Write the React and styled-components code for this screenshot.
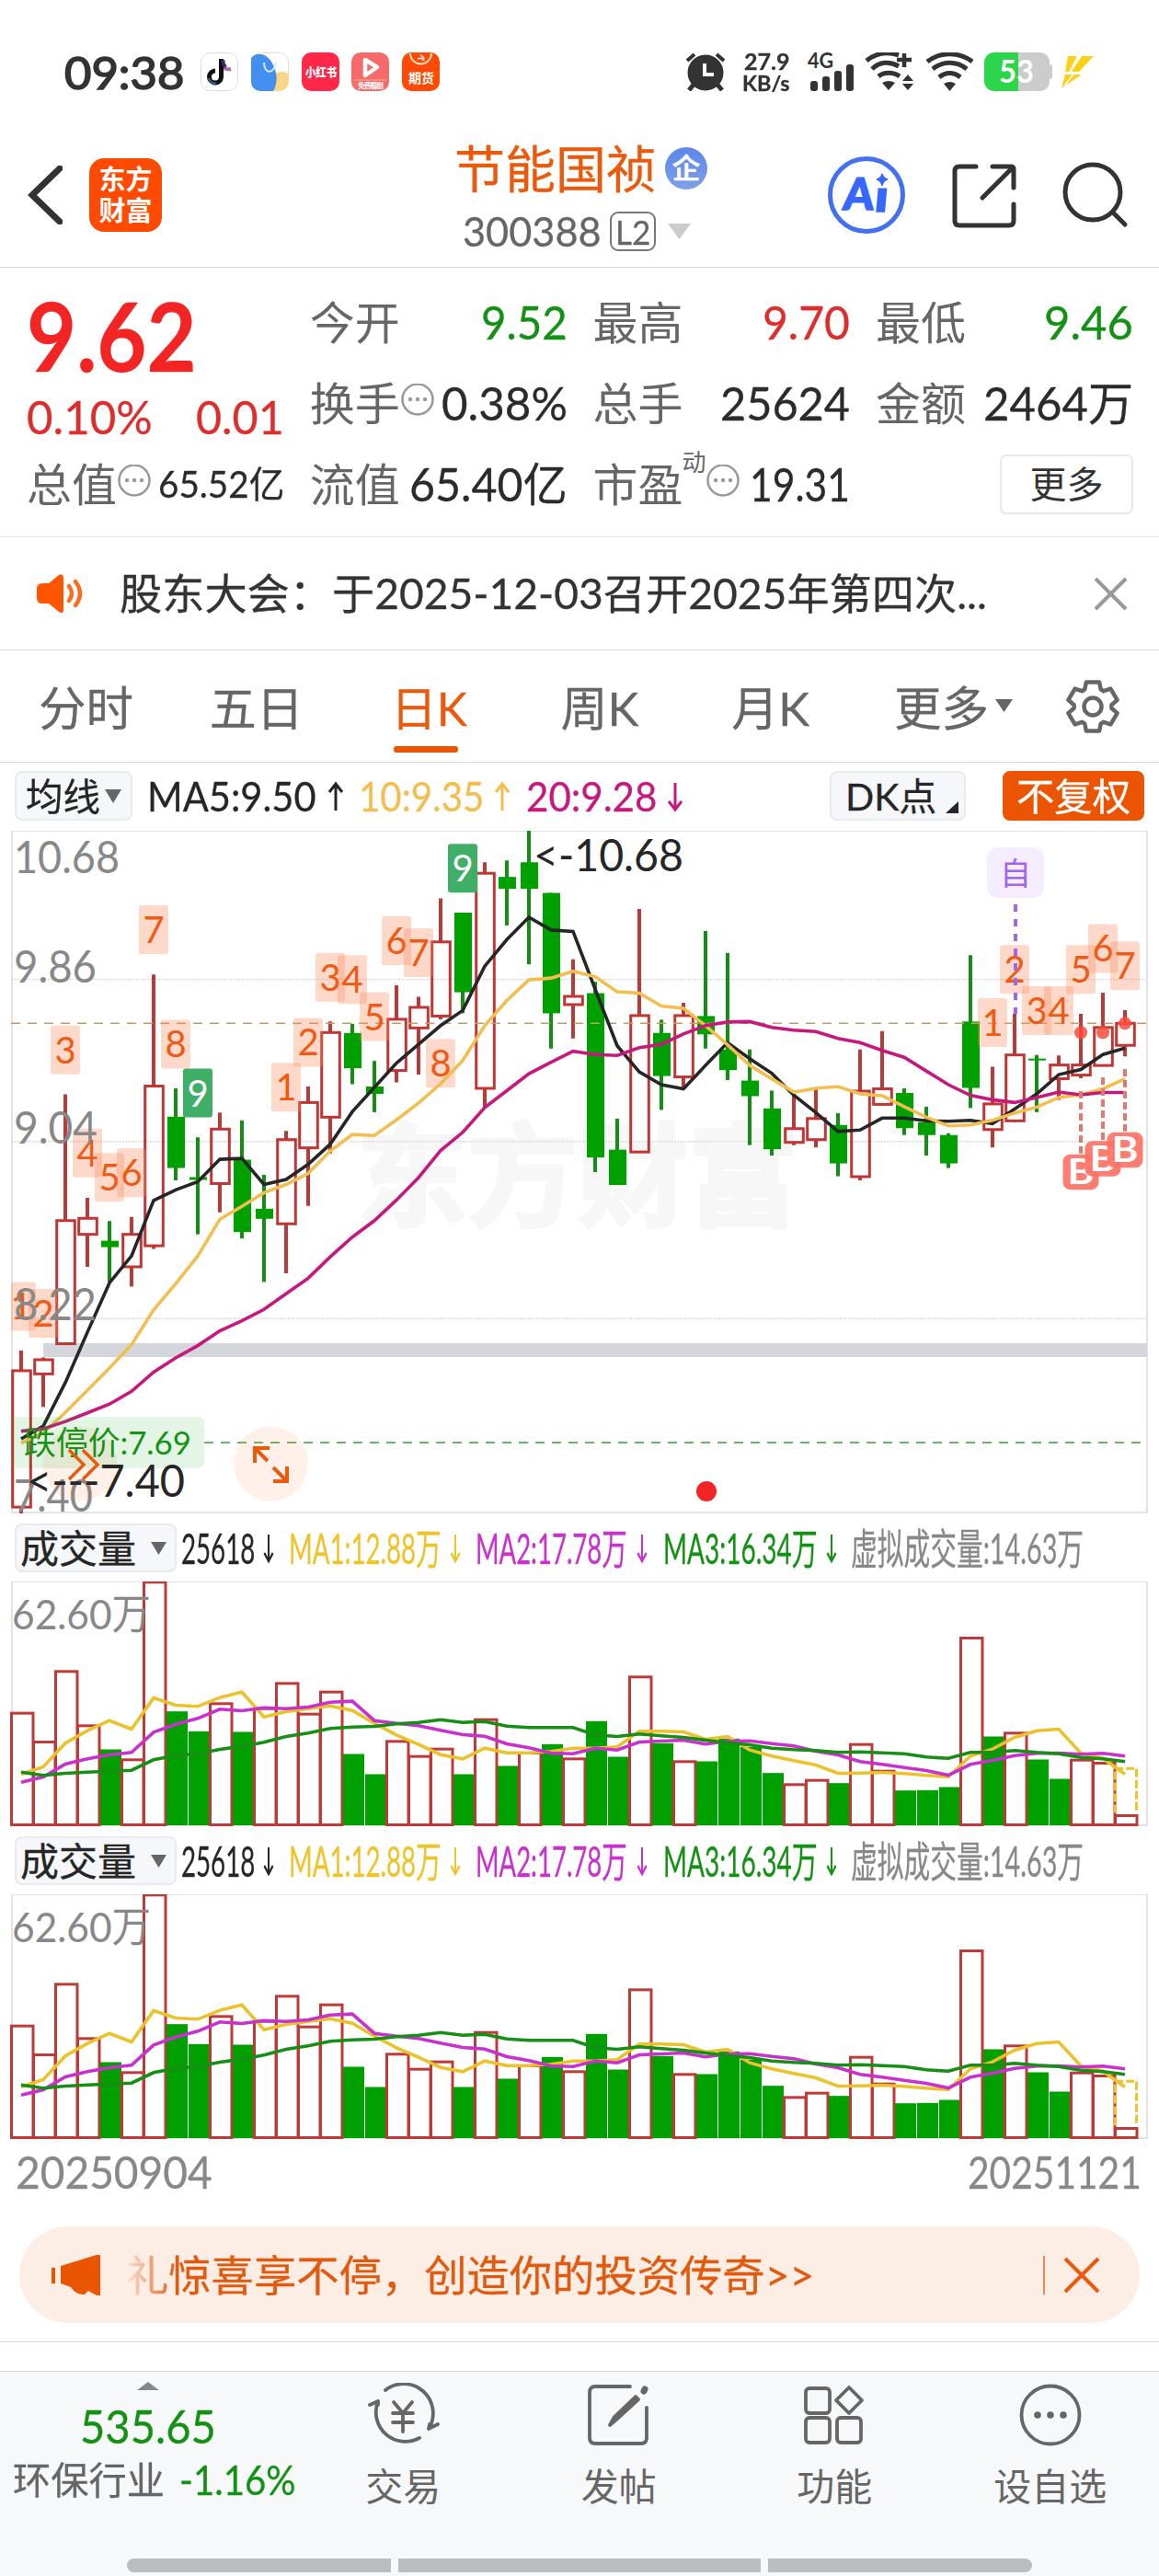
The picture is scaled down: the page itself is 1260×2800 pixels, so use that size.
import React, { useLayoutEffect, useRef, useState } from 'react'
import styled, { createGlobalStyle } from 'styled-components'

const GlobalStyle = createGlobalStyle`
  * { box-sizing: border-box; }
  body {
    margin: 0;
    background: #fff;
    color: #2b2b2b;
    font-family: Lato, "Noto Sans CJK SC", sans-serif;
  }
  svg { display: block; flex: none; }
  svg text { font-family: Lato, "Noto Sans CJK SC", sans-serif; }
`

const Page = styled.div`
  width: 1260px;
  height: 2800px;
  overflow: hidden;
  display: flex;
  flex-direction: column;
`

/* ---------- text squeezed to a known width ---------- */

const FitBox = styled.span`
  display: block;
  flex: none;
  width: ${p => p.$w}px;
  height: ${p => p.$size}px;
  line-height: ${p => p.$size}px;
  font-size: ${p => p.$size}px;
  font-weight: ${p => p.$weight || 400};
  color: ${p => p.$color || 'inherit'};
  -webkit-text-stroke: ${p => p.$stroke || 0.3}px currentColor;
  white-space: nowrap;
`

const FitInner = styled.span`
  display: inline-block;
  transform-origin: 0 50%;
`

function Fit({ w, size, weight, color, stroke, children }) {
  const ref = useRef(null)
  const [scale, setScale] = useState(1)
  useLayoutEffect(() => {
    setScale(w / ref.current.offsetWidth)
  }, [w, children])
  return (
    <FitBox $w={w} $size={size} $weight={weight} $color={color} $stroke={stroke}>
      <FitInner ref={ref} style={{ transform: `scaleX(${scale})` }}>{children}</FitInner>
    </FitBox>
  )
}

/* ---------- status bar ---------- */

const StatusBar = styled.div`
  height: 110px;
  padding: 57px 70px 0 70px;
  display: flex;
  align-items: flex-start;
  color: #333;
`

const Clock = styled.div`
  margin-top: -2px;
`

const AppIcons = styled.div`
  display: flex;
  gap: 13.8px;
  margin-left: 18px;
`

const StatusRight = styled.div`
  margin-left: auto;
  display: flex;
`

const Speed = styled.div`
  width: 52px;
  margin: -2px 18px 0 17px;
  display: flex;
  flex-direction: column;
  align-items: center;
  gap: 1px;
`

const AppIcon = ({ children }) => (
  <svg width="41" height="42" viewBox="0 0 41 42">{children}</svg>
)

const Status = () => (
  <StatusBar>
    <Clock><Fit w={130} size={48} stroke={1.6}>09:38</Fit></Clock>
    <AppIcons>
      <AppIcon>
        <rect x=".5" y=".5" width="40" height="41" rx="10" fill="#fff" stroke="#ddd" />
        <path d="M24 15c2 3 4 4 9 3" fill="none" stroke="#b06ab0" strokeWidth="4" />
        <path d="M22.500 7v20a6.500 6.500 0 1 1-6.500-7" fill="none" stroke="#111" strokeWidth="5" />
        <path d="M24.500 8c0 4 1 6 3 8" fill="none" stroke="#4a2a6c" strokeWidth="3.500" />
        <path d="M9 28a8 8 0 0 0 8 6" fill="none" stroke="#2a5a8c" strokeWidth="3" />
      </AppIcon>
      <AppIcon>
        <rect x=".5" y=".5" width="40" height="41" rx="10" fill="#fff" stroke="#ddd" />
        <path d="M23 26c4-6 12-6 17.500-3v10a9 9 0 0 1-9 8.500H20z" fill="#fbd585" />
        <path d="M0 6C6-1 16 1 22 10c6 9 8 22 2 32H10A10 10 0 0 1 0 32z" fill="#428ff0" />
        <path d="M14 11c0 13 11 13 13 0" fill="none" stroke="#d8e8fc" strokeWidth="2" />
      </AppIcon>
      <AppIcon>
        <rect width="41" height="42" rx="10" fill="#ff2848" />
        <text x="4" y="26" fontSize="13" fontWeight="900" fill="#fff" textLength="34" lengthAdjust="spacingAndGlyphs">小红书</text>
      </AppIcon>
      <AppIcon>
        <rect width="41" height="42" rx="10" fill="#f76a6c" />
        <path d="M15 8l13 8-13 9z" fill="none" stroke="#fff" strokeWidth="4.500" strokeLinejoin="round" />
        <path d="M2 30h37" stroke="#fbb27c" />
        <text x="7" y="38.500" fontSize="8" fontWeight="700" fill="#fff" textLength="28">免费看剧</text>
      </AppIcon>
      <AppIcon>
        <rect width="41" height="42" rx="10" fill="#ff4a04" />
        <path d="M9 1a11.500 11.500 0 0 0 23 0M17 7a5 5 0 0 1 7 2M20 3a6 6 0 0 1 4 4" fill="none" stroke="#ffe4d8" strokeWidth="1.800" />
        <text x="7" y="33" fontSize="14" fontWeight="700" fill="#fff" textLength="28">期货</text>
      </AppIcon>
    </AppIcons>
    <StatusRight>
      <svg width="45" height="42" viewBox="0 0 45 42">
        <circle cx="22" cy="22" r="19.500" fill="#333" />
        <path d="M2 9l8-7M34 2l8 7" stroke="#333" strokeWidth="4" />
        <path d="M9 35l-5 6M35 35l5 6" stroke="#333" strokeWidth="5" />
        <path d="M21 12v12h10" fill="none" stroke="#fff" strokeWidth="4" />
      </svg>
      <Speed>
        <Fit w={49} size={24} weight={700}>27.9</Fit>
        <Fit w={52} size={22} weight={700}>KB/s</Fit>
      </Speed>
      <svg width="53" height="42" viewBox="0 0 53 42">
        <text x="1" y="17" fontSize="22" fontWeight="700" fill="#333" textLength="28" lengthAdjust="spacingAndGlyphs">4G</text>
        <rect x="4" y="31" width="8" height="11" rx="3" fill="#333" />
        <rect x="17" y="26" width="8" height="16" rx="3" fill="#333" />
        <rect x="30" y="20" width="8" height="22" rx="3" fill="#333" />
        <rect x="43" y="13" width="8" height="29" rx="3" fill="#333" />
      </svg>
      <svg width="64" height="42" viewBox="-11 0 64 42">
        <g fill="none" stroke="#333" strokeWidth="5">
          <path d="M1 9C12 0 24-1 36 3" />
          <path d="M7 18C15 10 26 9 36 15" />
          <path d="M14 26C20 21 30 21 37 26" />
          <path d="M34 8h16M42 1v15" strokeWidth="4.500" />
        </g>
        <path d="M18 33q7-4 14 0l-7 8zM40 31h12l-6-7zM40 34h12l-6 7z" fill="#333" />
      </svg>
      <svg width="74" height="42" viewBox="-13 0 74 42">
        <g fill="none" stroke="#333" strokeWidth="5">
          <path d="M1 10C15-1 36-1 50 10" />
          <path d="M7 18C18 9 33 9 44 18" />
          <path d="M14 27C21 21 30 21 37 27" />
        </g>
        <path d="M19 34q6.500-4 13 0l-6.500 8z" fill="#333" />
      </svg>
      <svg width="86" height="42" viewBox="-2 0 86 42">
        <path d="M11 0h50a10 10 0 0 1 10 10v22a10 10 0 0 1-10 10H11z" fill="#ccc" />
        <rect x="68" y="13" width="6" height="16" rx="3" fill="#ccc" />
        <path d="M37 0v42H11A11 11 0 0 1 0 31V11A11 11 0 0 1 11 0z" fill="#2bd64a" />
        <text x="16" y="33" fontSize="34" fontWeight="700" fill="#fff" textLength="38" lengthAdjust="spacingAndGlyphs">53</text>
      </svg>
      <svg width="36" height="42" viewBox="0 0 36 42">
        <path d="M7 4h10L8 21H4zM22 4h13L19 21h-8z" fill="#fdd014" />
        <path d="M4 24h18L0 39z" fill="#fdd014" />
        <path d="M14 22L2 38" stroke="#fff" strokeWidth="1.500" />
      </svg>
    </StatusRight>
  </StatusBar>
)

/* ---------- title bar ---------- */

const TitleBar = styled.header`
  height: 181px;
  border-bottom: 1px solid #d8d8d8;
  display: grid;
  grid-template-columns: 494px 1fr 360px;
`

const TitleSide = styled.div`
  display: flex;
  align-items: center;
  height: 204px;
  padding-left: ${p => p.$pad}px;
`

const Logo = styled.div`
  width: 79px;
  height: 80px;
  margin-left: 29px;
  border-radius: 16px;
  background: #ff4a00;
  color: #fff;
  display: flex;
  flex-direction: column;
  align-items: center;
  justify-content: center;
  font-size: 29px;
  font-weight: 700;
  line-height: 34px;
`

const TitleMid = styled.div`
  display: flex;
  flex-direction: column;
  align-items: flex-start;
`

const NameRow = styled.div`
  display: flex;
  align-items: center;
  gap: 9px;
  height: 60px;
  margin-top: 43px;
`

const Badge = styled.span`
  width: 46px;
  height: 46px;
  border-radius: 50%;
  background: linear-gradient(#5b86ec, #7fa0e6);
  color: #fff;
  font-size: 31px;
  font-weight: 700;
  line-height: 44px;
  text-align: center;
`

const CodeRow = styled.div`
  display: flex;
  align-items: center;
  height: 50px;
  margin: 13px 0 0 9px;
  color: #666;
`

const Level = styled.span`
  width: 50px;
  height: 43px;
  margin: 0 13px 0 9px;
  border: 2px solid #777;
  border-radius: 9px;
  display: flex;
  align-items: center;
  justify-content: center;
`

const Header = () => (
  <TitleBar>
    <TitleSide $pad={30}>
      <svg width="38" height="64" viewBox="0 0 38 64">
        <path d="M35 3L5 32l30 29" fill="none" stroke="#333" strokeWidth="7" strokeLinecap="round" />
      </svg>
      <Logo><span>东方</span><span>财富</span></Logo>
    </TitleSide>
    <TitleMid>
      <NameRow>
        <Fit w={220} size={55} color="#ea5a0c">节能国祯</Fit>
        <Badge>企</Badge>
      </NameRow>
      <CodeRow>
        <Fit w={151} size={45}>300388</Fit>
        <Level><Fit w={38} size={37}>L2</Fit></Level>
        <svg width="25" height="17"><path d="M0 0h25L12.500 17z" fill="#ccc" /></svg>
      </CodeRow>
    </TitleMid>
    <TitleSide $pad={0}>
      <svg width="360" height="86" viewBox="0 0 360 86">
        <circle cx="42" cy="43" r="39.500" fill="none" stroke="#4270ee" strokeWidth="5" />
        <g transform="skewX(-5)" fill="#3767ff" stroke="#3767ff" strokeWidth="1.500" fontSize="48" fontWeight="900">
          <text x="21" y="59" textLength="33" lengthAdjust="spacingAndGlyphs">A</text>
          <text x="55" y="61" textLength="15" lengthAdjust="spacingAndGlyphs">ı</text>
        </g>
        <path d="M59 20q1 5 6 6q-5 1-6 7q-1-6-6-7q5-1 6-6z" fill="#3767ff" stroke="#3767ff" strokeWidth="1.500" />
        <g fill="none" stroke="#333" strokeWidth="5" strokeLinecap="round">
          <path d="M161 12h-18q-5 0-5 5v54q0 5 5 5h54q5 0 5-5V53M179 12h20q3 0 3 3v20M201 13l-33 33" />
          <circle cx="288" cy="40" r="30" />
          <path d="M310 62l13 13" />
        </g>
      </svg>
    </TitleSide>
  </TitleBar>
)

/* ---------- quote panel ---------- */

const RED = '#dd2e2e'
const GREEN = '#149114'

const Quote = styled.section`
  height: 293px;
  padding: 15px 0 0 29px;
  border-bottom: 1px solid #e8e8e8;
  display: grid;
  grid-template-columns: repeat(4, 280px);
  grid-auto-rows: 88px;
  column-gap: 27.7px;
`

const Cell = styled.div`
  display: flex;
  align-items: center;
  justify-content: space-between;
`

const Label = styled.span`
  display: flex;
  align-items: center;
  color: #666;
  font-size: 49px;
  line-height: 50px;
  white-space: nowrap;
`

const Sup = styled.sup`
  align-self: flex-start;
  font-size: 26px;
  line-height: 26px;
  margin: -12px 0 0 -1px;
`

const PriceCell = styled.div`
  grid-row: span 2;
  display: flex;
  flex-direction: column;
  padding-top: 7px;
`

const Change = styled.div`
  display: flex;
  justify-content: space-between;
  margin-top: 11px;
`

const MoreButton = styled.button`
  width: 145px;
  height: 65px;
  margin-left: auto;
  padding: 0;
  border: 2px solid #e8e8e8;
  border-radius: 7px;
  background: #fff;
  color: #333;
  font: 40px/54px Lato, "Noto Sans CJK SC", sans-serif;
`

const Dots = () => (
  <svg width="38" height="42" viewBox="0 2 38 42">
    <circle cx="19" cy="19" r="16.500" fill="none" stroke="#999" strokeWidth="2.500" />
    <g fill="#999"><circle cx="11" cy="19" r="2.200" /><circle cx="19" cy="19" r="2.200" /><circle cx="27" cy="19" r="2.200" /></g>
  </svg>
)

const Item = ({ label, dots, sup, value, w, size = 50, color }) => (
  <Cell>
    <Label>{label}{sup && <Sup>{sup}</Sup>}{dots && <Dots />}</Label>
    <Fit w={w} size={size} color={color}>{value}</Fit>
  </Cell>
)

const QuotePanel = () => (
  <Quote>
    <PriceCell>
      <Fit w={185} size={103} weight={700} color="#f22424">9.62</Fit>
      <Change>
        <Fit w={137} size={51} color={RED}>0.10%</Fit>
        <Fit w={96} size={51} color={RED}>0.01</Fit>
      </Change>
    </PriceCell>
    <Item label="今开" value="9.52" w={94} color={GREEN} />
    <Item label="最高" value="9.70" w={95} color={RED} />
    <Item label="最低" value="9.46" w={97} color={GREEN} />
    <Item label="换手" dots value="0.38%" w={137} />
    <Item label="总手" value="25624" w={141} />
    <Item label="金额" value="2464万" w={163} />
    <Item label="总值" dots value="65.52亿" w={137} size={40} />
    <Item label="流值" value="65.40亿" w={172} />
    <Item label="市盈" sup="动" dots value="19.31" w={109} />
    <Cell><MoreButton>更多</MoreButton></Cell>
  </Quote>
)

/* ---------- notice ---------- */

const Notice = styled.section`
  height: 123px;
  padding: 0 34px 0 38px;
  border-bottom: 1px solid #d8d8d8;
  display: flex;
  align-items: center;
`

const NoticeText = styled.div`
  flex: 1;
  margin-left: 36px;
`

const NoticeBar = () => (
  <Notice>
    <svg width="56" height="46" viewBox="0 0 56 46">
      <path d="M8 12h7L26 3q5-2 5 3v35q0 5-5 2L15 34H8q-6 0-6-6V18q0-6 6-6z" fill="#ff5500" />
      <path d="M37 15q6 8 0 16M44 10q10 13 0 26" fill="none" stroke="#ff6a20" strokeWidth="4.500" strokeLinecap="round" />
    </svg>
    <NoticeText>
      <Fit w={943} size={46} color="#333">股东大会：于2025-12-03召开2025年第四次...</Fit>
    </NoticeText>
    <svg width="37" height="37"><path d="M2 2l33 33M35 2L2 35" stroke="#999" strokeWidth="4" /></svg>
  </Notice>
)

/* ---------- period tabs ---------- */

const Tabs = styled.nav`
  height: 122px;
  border-bottom: 1px solid #d8d8d8;
  padding: 0 42px;
  display: flex;
`

const Tab = styled.div`
  width: ${p => p.$w}px;
  padding-top: 37px;
  color: ${p => (p.$on ? '#ea5a0c' : '#666')};
`

const TabLabel = styled.div`
  display: flex;
  align-items: center;
`

const Underline = styled.div`
  width: 70px;
  height: 7px;
  margin: 16px 0 0 3px;
  border-radius: 3px;
  background: #ea5504;
`

const gear = () => {
  const pts = []
  for (let k = 0; k < 6; k++) {
    [[-25, 20.5], [-15, 27.5], [15, 27.5], [25, 20.5]].forEach(([d, r]) => {
      const a = (k * 60 - 90 + d) * Math.PI / 180
      pts.push(`${(30 + r * Math.cos(a)).toFixed(1)},${(31 + r * Math.sin(a)).toFixed(1)}`)
    })
  }
  return pts.join(' ')
}

const PeriodTabs = () => (
  <Tabs>
    <Tab $w={186}><Fit w={103} size={51}>分时</Fit></Tab>
    <Tab $w={197}><Fit w={102} size={51}>五日</Fit></Tab>
    <Tab $w={185} $on><Fit w={83} size={51}>日K</Fit><Underline /></Tab>
    <Tab $w={186}><Fit w={85} size={51}>周K</Fit></Tab>
    <Tab $w={177}><Fit w={85} size={51}>月K</Fit></Tab>
    <Tab $w={186}>
      <TabLabel>
        <Fit w={103} size={51}>更多</Fit>
        <svg width="30" height="19"><path d="M7 0h19l-9.500 14z" fill="#666" /></svg>
      </TabLabel>
    </Tab>
    <svg width="60" height="92" viewBox="0 -30 60 92">
      <polygon points={gear()} fill="none" stroke="#666" strokeWidth="4.500" strokeLinejoin="round" />
      <circle cx="30" cy="31" r="9.500" fill="none" stroke="#666" strokeWidth="4.500" />
    </svg>
  </Tabs>
)

/* ---------- moving average row ---------- */

const Legend = styled.div`
  height: 74px;
  padding: ${p => p.$top}px 0 0 16px;
  display: flex;
  align-items: flex-start;
`

const Chip = styled.div`
  flex: none;
  width: ${p => p.$w}px;
  height: ${p => p.$h || 54}px;
  padding-left: ${p => p.$pad}px;
  border: 2px solid ${p => (p.$solid ? '#eb5502' : '#e9eaee')};
  border-radius: 8px;
  background: ${p => (p.$solid ? '#eb5502' : '#f6f7fa')};
  color: ${p => (p.$solid ? '#fff' : '#262626')};
  display: flex;
  align-items: center;
`

const Spot = styled.div`
  margin-left: ${p => p.$ml || 0}px;
  padding-top: ${p => p.$pt || 0}px;
  display: flex;
  align-items: center;
`

const Arrow = ({ up, color, w = 18, ml = 0, h = 34 }) => (
  <Spot $ml={ml}>
    <svg width={w} height={h} viewBox="0 0 18 34" preserveAspectRatio="none">
      <path d={up ? 'M9 32V3M2 12l7-9 7 9' : 'M9 2v29M2 22l7 9 7-9'} fill="none" stroke={color} strokeWidth="3" />
    </svg>
  </Spot>
)

const MaLegend = () => (
  <Legend $top={9}>
    <Chip $w={128} $pad={10}>
      <Fit w={81} size={41}>均线</Fit>
      <svg width="28" height="15"><path d="M5 0h18l-9 15z" fill="#666" /></svg>
    </Chip>
    <Spot $ml={16} $pt={5}>
      <Fit w={184} size={45} color="#262626">MA5:9.50</Fit>
      <Arrow up color="#262626" ml={12} />
      <Spot $ml={16}><Fit w={136} size={45} color="#f3be50">10:9.35</Fit></Spot>
      <Arrow up color="#f3be50" ml={11} />
      <Spot $ml={17}><Fit w={142} size={45} color="#c5197d">20:9.28</Fit></Spot>
      <Arrow color="#c5197d" ml={11} />
    </Spot>
    <Spot $ml={159}>
      <Chip $w={148} $pad={15}>
        <Fit w={99} size={41}>DK点</Fit>
        <svg width="26" height="40"><path d="M24 26v13H10z" fill="#262626" /></svg>
      </Chip>
    </Spot>
    <Spot $ml={40}>
      <Chip $w={154} $pad={13} $solid><Fit w={124} size={41}>不复权</Fit></Chip>
    </Spot>
  </Legend>
)

/* ---------- candle chart ---------- */

// [high, body top, body bottom, low, rising] on the plot's own vertical scale
const candles = [
  [1160, 1204, 1502, 1517, 1], [1175, 1180, 1211, 1283, 1], [600, 876, 1145, 1146, 1], [826, 871, 906, 977, 1],
  [877, 920, 934, 1010, 0], [868, 906, 977, 1020, 1], [338, 582, 931, 938, 1], [587, 649, 761, 788, 0],
  [694, 781, 787, 906, 0], [640, 676, 795, 858, 1], [657, 743, 901, 915, 0], [776, 850, 872, 1010, 0],
  [680, 699, 883, 991, 1], [583, 618, 717, 844, 1], [441, 465, 650, 729, 1], [446, 466, 543, 578, 0],
  [527, 583, 599, 639, 0], [362, 436, 548, 574, 1], [387, 410, 455, 557, 1], [172, 267, 429, 436, 1],
  [203, 203, 377, 423, 0], [93, 117, 587, 628, 1], [89, 125, 151, 231, 0], [24, 93, 151, 316, 0],
  [160, 160, 423, 500, 0], [305, 386, 404, 478, 1], [354, 379, 738, 770, 0], [653, 721, 798, 798, 0],
  [195, 428, 726, 728, 1], [437, 466, 560, 634, 0], [400, 428, 562, 584, 1], [243, 429, 469, 500, 0],
  [291, 502, 547, 569, 0], [502, 570, 604, 711, 0], [592, 631, 720, 734, 0], [600, 675, 705, 711, 1],
  [588, 653, 699, 716, 1], [641, 667, 751, 779, 0], [502, 593, 780, 788, 1], [462, 588, 622, 624, 1],
  [587, 597, 674, 689, 0], [627, 661, 689, 734, 0], [685, 689, 751, 761, 0], [296, 441, 586, 630, 0],
  [540, 621, 677, 716, 1], [424, 514, 658, 661, 1], [514, 522, 526, 639, 0], [515, 536, 566, 612, 1],
  [424, 536, 558, 565, 1], [378, 454, 537, 538, 1], [416, 445, 493, 517, 1]
]

const ma5 = [1353, 1325, 1230, 1120, 1012, 953, 832, 809, 791, 742, 740, 797, 786, 753, 709, 638, 585, 532, 491, 450, 417, 320, 262, 213, 241, 244, 370, 494, 551, 579, 588, 537, 487, 522, 554, 602, 640, 681, 678, 652, 652, 658, 659, 657, 664, 632, 599, 557, 546, 513, 499]
const ma10 = [1362, 1340, 1295, 1247, 1198, 1147, 1071, 1014, 953, 873, 845, 815, 797, 773, 724, 688, 690, 656, 619, 577, 526, 450, 395, 350, 346, 331, 343, 376, 379, 407, 412, 450, 492, 537, 566, 595, 587, 583, 599, 603, 627, 650, 669, 667, 657, 641, 628, 607, 601, 588, 566]
const ma20 = [1336, 1331, 1315, 1296, 1277, 1249, 1207, 1176, 1149, 1117, 1095, 1070, 1036, 1002, 955, 912, 876, 831, 782, 723, 683, 629, 592, 555, 530, 506, 513, 515, 498, 491, 468, 450, 442, 441, 454, 460, 463, 478, 487, 504, 519, 549, 579, 602, 612, 618, 607, 595, 601, 596, 596]

// [candle index, digit, top]
const marks = [
  [0, 1, 1010], [1, 2, 1025], [2, 3, 450], [3, 4, 675], [4, 5, 728], [5, 6, 718], [6, 7, 187], [7, 8, 437], [8, 9, 544],
  [12, 1, 531], [13, 2, 433], [14, 3, 291], [15, 4, 296], [16, 5, 377], [17, 6, 211], [18, 7, 237], [19, 8, 479], [20, 9, 53],
  [44, 1, 390], [45, 2, 274], [46, 3, 364], [47, 4, 364], [48, 5, 274], [49, 6, 228], [50, 7, 266]
]

// [label, baseline, width]
const axis = [['10.68', 117, 111], ['9.86', 355, 86], ['9.04', 708, 87], ['8.22', 1094, 86], ['7.40', 1512, 82]]

// [candle index, line from, box top, dot]
const buys = [[48, 593, 731, 465], [49, 563, 702, 465], [50, 545, 683, 445]]

const xAt = i => 23 + 24 * i
const yAt = v => v * 0.49744 - 12
const line = (vals, y) => vals.map((v, i) => `${xAt(i)},${y(v).toFixed(1)}`).join(' ')

const Plot = styled.svg`
  width: 1260px;
  height: ${p => p.$h}px;
`

const CandleChart = () => (
  <Plot $h={742} viewBox="0 0 1260 742">
    <text x="388" y="420" fontSize="122" fontWeight="700" fill="#f7f7f7" stroke="#f7f7f7" strokeWidth="4" textLength="480" lengthAdjust="spacingAndGlyphs">东方财富</text>
    <rect x="13" y="0" width="1234" height="741" fill="none" stroke="#e2e2e2" strokeWidth="2" />
    {[349, 703, 1090].map(v => (
      <path key={v} d={`M13 ${yAt(v)}H1247`} stroke="#ddd" strokeWidth="1.500" strokeDasharray="2 1" />
    ))}
    <rect x="47" y="557" width="1200" height="15" fill="#d3d7dc" />
    {candles.map(([h, t, b, l, up], i) => (
      <g key={i} stroke={up ? '#b93a38' : '#138f13'}>
        <path d={up ? `M${xAt(i)} ${yAt(h)}V${yAt(t)}M${xAt(i)} ${yAt(b)}V${yAt(l)}` : `M${xAt(i)} ${yAt(h)}V${yAt(l)}`} strokeWidth="4" />
        {up
          ? <rect x={xAt(i) - 9.3} y={yAt(t)} width="19.600" height={yAt(b) - yAt(t)} fill="none" stroke="#c03634" strokeWidth="3" />
          : <rect x={xAt(i) - 9} y={yAt(t)} width="19" height={yAt(b) - yAt(t)} fill="#00a000" stroke="none" />}
      </g>
    ))}
    <path d={`M12 ${yAt(445)}H1247`} stroke="#c79c62" strokeWidth="1.500" strokeDasharray="10 8" />
    {marks.map(([i, n, top]) => (
      <g key={i}>
        <rect x={Math.max(12, xAt(i) - 16)} y={yAt(top)} width={i ? 32 : 27} height="53" rx="3" fill={n === 9 ? '#3fae66' : 'rgba(252,140,90,.33)'} />
        <text x={xAt(i)} y={yAt(top) + 41} fontSize="40" textAnchor="middle" fill={n === 9 ? '#fff' : '#f05a14'}>{n}</text>
      </g>
    ))}
    <g fill="none" strokeWidth="3.600">
      <polyline points={line(ma5, yAt)} stroke="#262626" />
      <polyline points={line(ma10, yAt)} stroke="#f3be50" />
      <polyline points={line(ma20, yAt)} stroke="#c5197d" />
    </g>
    {axis.map(([label, v, w]) => (
      <text key={label} x="15" y={yAt(v)} fontSize="49" fill="#888" textLength={w + 4} lengthAdjust="spacingAndGlyphs">{label}</text>
    ))}
    <text x="580" y="44" fontSize="48" fill="#262626" textLength="163" lengthAdjust="spacingAndGlyphs">&lt;-10.68</text>

    <path d="M222 665H1245" stroke="#62b862" strokeWidth="2" strokeDasharray="10 8" />
    <circle cx="87" cy="688" r="40.500" fill="rgba(255,120,50,.1)" />
    <path d="M13 637H215a7 7 0 0 1 7 7v42a7 7 0 0 1-7 7H13z" fill="rgba(0,160,20,.11)" />
    <text x="26" y="678" fontSize="35" fill="#159315" textLength="182" lengthAdjust="spacingAndGlyphs">跌停价:7.69</text>
    <path d="M75 673l16 16-16 16M90 673l16 16-16 16" fill="none" stroke="#ea5a0c" strokeWidth="3.500" />
    <text x="29" y="724" fontSize="48" fill="#262626" textLength="172" lengthAdjust="spacingAndGlyphs">&lt;---7.40</text>
    <circle cx="294.500" cy="688" r="40.500" fill="rgba(255,120,50,.1)" />
    <path d="M293 671h-16v16M277 671l14 14M297 707h15v-16M312 707l-15-15" fill="none" stroke="#ea5a0c" strokeWidth="4" />
    <circle cx="768" cy="718" r="11" fill="#f22424" />

    <rect x="1073" y="18" width="62" height="55" rx="12" fill="#f5edff" />
    <text x="1104" y="59" fontSize="34" textAnchor="middle" fill="#a066ea">自</text>
    <path d="M1104 80V199" stroke="#a066ea" strokeWidth="4" strokeDasharray="8 8" />
    {buys.map(([i, from, top, dot]) => (
      <g key={i}>
        <path d={`M${xAt(i)} ${yAt(from)}V${yAt(top) - 1}`} stroke="#dd7b70" strokeWidth="4" strokeDasharray="8 4" />
        <circle cx={xAt(i)} cy={yAt(dot)} r="7" fill="#f94a38" fillOpacity=".85" />
        <rect x={xAt(i) - 19.5} y={yAt(top)} width="39" height="38.500" rx="8" fill="#fd7264" fillOpacity=".92" />
        <text x={xAt(i)} y={yAt(top) + 32.5} fontSize="38" fontWeight="700" textAnchor="middle" fill="#fff" textLength="29" lengthAdjust="spacingAndGlyphs">B</text>
      </g>
    ))}
  </Plot>
)

/* ---------- volume chart ---------- */

// [top, rising]
const volumes = [
  [665, 1], [759, 1], [529, 1], [706, 1], [783, 0], [817, 1], [238, 1], [659, 0], [724, 0], [634, 1], [726, 0], [650, 1], [568, 1],
  [668, 1], [596, 1], [798, 0], [864, 0], [757, 1], [806, 1], [782, 1], [864, 0], [686, 1], [837, 0], [795, 1], [766, 0], [814, 1],
  [691, 0], [807, 0], [547, 1], [763, 0], [823, 1], [822, 0], [748, 0], [775, 0], [860, 0], [898, 1], [884, 1], [893, 0], [767, 1],
  [854, 1], [917, 0], [916, 0], [906, 0], [420, 1], [741, 0], [730, 1], [816, 0], [879, 0], [818, 1], [828, 1], [999, 1]
]

const vma1 = [864, 840, 763, 722, 689, 717, 615, 639, 643, 614, 596, 677, 660, 650, 641, 656, 698, 736, 767, 800, 814, 779, 794, 794, 790, 779, 779, 775, 724, 724, 726, 750, 741, 785, 805, 820, 834, 861, 860, 858, 862, 868, 872, 805, 782, 744, 722, 717, 795, 812, 864]
const vma2 = [890, 873, 831, 814, 801, 793, 727, 701, 682, 652, 657, 647, 650, 645, 629, 626, 689, 698, 706, 721, 735, 740, 765, 778, 795, 797, 779, 785, 759, 756, 753, 766, 757, 755, 764, 772, 789, 801, 823, 832, 842, 852, 867, 832, 819, 803, 796, 795, 799, 796, 805]
const vma3 = [857, 868, 861, 857, 854, 851, 817, 803, 797, 783, 773, 760, 741, 730, 715, 710, 708, 700, 695, 686, 695, 692, 707, 712, 712, 712, 736, 741, 733, 739, 744, 753, 761, 768, 779, 784, 787, 793, 791, 794, 797, 808, 812, 793, 793, 787, 793, 797, 809, 814, 823]

const volY = v => v / 3 - 78.5

const VolumeLegend = () => (
  <Legend $top={11}>
    <Chip $w={176} $h={53} $pad={4}>
      <Fit w={126} size={42}>成交量</Fit>
      <svg width="36" height="14"><path d="M16 0h17l-8.500 14z" fill="#666" /></svg>
    </Chip>
    <Spot $ml={5} $pt={4}>
      <Fit w={80} size={46} color="#262626">25618</Fit>
      <Arrow w={12} color="#262626" ml={9} />
      <Spot $ml={16}><Fit w={166} size={46} color="#eec32c">MA1:12.88万</Fit></Spot>
      <Arrow w={12} color="#eec32c" ml={9} />
      <Spot $ml={16}><Fit w={165} size={46} color="#c832cc">MA2:17.78万</Fit></Spot>
      <Arrow w={12} color="#c832cc" ml={10} />
      <Spot $ml={17}><Fit w={168} size={46} color="#149114">MA3:16.34万</Fit></Spot>
      <Arrow w={12} color="#149114" ml={9} />
      <Spot $ml={15}><Fit w={253} size={46} color="#888">虚拟成交量:14.63万</Fit></Spot>
    </Spot>
  </Legend>
)

const VolumeChart = () => (
  <Plot $h={266} viewBox="0 0 1260 266">
    <rect x="13" y="0" width="1234" height="265" fill="none" stroke="#e2e2e2" strokeWidth="2" />
    {volumes.map(([top, up], i) => up
      ? <rect key={i} x={xAt(i) - 10.5} y={volY(top)} width="23.500" height={264.5 - volY(top)} fill="#fff" stroke="#bd3a38" strokeWidth="3" />
      : <rect key={i} x={xAt(i) - 10} y={volY(top)} width="23" height={265 - volY(top)} fill="#00a000" />)}
    <path d={`M1212.500 ${volY(990)}V${volY(845)}H1235.500V${volY(990)}`} fill="none" stroke="#eec32c" strokeWidth="3" strokeDasharray="9 3" />
    <g fill="none" strokeWidth="3.600">
      <polyline points={line(vma1, volY)} stroke="#ebc22c" />
      <polyline points={line(vma2, volY)} stroke="#c832cc" />
      <polyline points={line(vma3, volY)} stroke="#178f17" />
    </g>
    <text x="13" y="52" fontSize="45" fill="#888" textLength="151" lengthAdjust="spacingAndGlyphs">62.60万</text>
  </Plot>
)

const Dates = styled.div`
  height: 75px;
  padding: 12px 19px 0 17px;
  display: flex;
  justify-content: space-between;
`

/* ---------- promo banner ---------- */

const BannerWrap = styled.div`
  height: 146px;
  padding: 20px 21px 0;
  border-bottom: 1px solid #d8d8d8;
`

const Banner = styled.div`
  height: 105px;
  border-radius: 53px;
  background: #fdeee5;
  padding: 0 43px 0 34px;
  display: flex;
  align-items: center;
`

const Marquee = styled.div`
  flex: 1;
  margin-left: 22px;
  -webkit-mask-image: linear-gradient(90deg, transparent, #000 60px);
  mask-image: linear-gradient(90deg, transparent, #000 60px);
`

const Divider = styled.div`
  width: 2px;
  height: 42px;
  margin-right: 20px;
  background: #e88a58;
`

const Promo = () => (
  <BannerWrap>
    <Banner>
      <svg width="56" height="48" viewBox="0 0 56 48">
        <path d="M1 16h4v17H1zM11 14L50 2h4v44h-4L41 41l-4 4q-9 1-15-8L11 33z" fill="#ea5504" />
      </svg>
      <Marquee><Spot $ml={4}><Fit w={748} size={46} color="#e05a10">礼惊喜享不停，创造你的投资传奇&gt;&gt;</Fit></Spot></Marquee>
      <Divider />
      <svg width="40" height="40"><path d="M2 2l36 36M38 2L2 38" stroke="#ea5a0c" strokeWidth="4" /></svg>
    </Banner>
  </BannerWrap>
)

/* ---------- bottom bar ---------- */

const Bottom = styled.footer`
  height: 223px;
  margin-top: 31px;
  border-top: 1px solid #d8d8d8;
  background: #f7f8fa;
`

const BottomItems = styled.div`
  display: grid;
  grid-template-columns: 322px repeat(4, 234.500px);
  height: 203px;
  color: #666;
`

const Action = styled.div`
  display: flex;
  flex-direction: column;
  align-items: center;
  padding: 12px 2px 0 0;
  font-size: 41px;
  line-height: 50px;
  gap: 18px;
`

const Sector = styled.div`
  display: flex;
  flex-direction: column;
  align-items: center;
`

const SectorRow = styled.div`
  display: flex;
  align-items: center;
  gap: 16px;
  margin-top: 11px;
  padding-left: 13px;
`

const HomeBar = styled.div`
  display: flex;
  gap: 8px;
  margin-left: 138px;
`

const HomeSeg = styled.span`
  width: ${p => p.$w}px;
  height: 15px;
  background: #bbbdbf;
  border-radius: ${p => p.$r || 0};
`

const Icon = ({ children }) => (
  <svg width="80" height="70" viewBox="0 0 80 70" fill="none" stroke="#666" strokeWidth="3.800" strokeLinecap="round" strokeLinejoin="round">{children}</svg>
)

const BottomBar = () => (
  <Bottom>
    <BottomItems>
      <Sector>
        <svg width="24" height="20"><path d="M0 20h24L12 11z" fill="#888" /></svg>
        <Spot $pt={14}><Fit w={148} size={50} color={GREEN}>535.65</Fit></Spot>
        <SectorRow>
          <Fit w={165} size={41}>环保行业</Fit>
          <Fit w={127} size={44} color={GREEN}>-1.16%</Fit>
        </SectorRow>
      </Sector>
      <Action>
        <Icon>
          <path d="M21 8A32 32 0 0 1 68 50M58 60A32 32 0 0 1 13 20M13 20l-9 4M13 20l0 4M68 50l10-5M68 50l1-5" />
          <path d="M30 21l10 12 10-12M40 33v20M29 33h22M29 43h22" />
        </Icon>
        交易
      </Action>
      <Action>
        <Icon>
          <path d="M52 4H14q-6 0-6 6v50q0 6 6 6h50q6 0 6-6V27" />
          <path d="M61 18L37 40l-7 6 5-9L58 15z" fill="#666" />
          <path d="M67 9l1-2" strokeWidth="7" />
        </Icon>
        发帖
      </Action>
      <Action>
        <Icon>
          <rect x="9" y="6" width="26" height="27" rx="4" />
          <rect x="9" y="38" width="26" height="27" rx="4" />
          <rect x="43" y="38" width="26" height="27" rx="4" />
          <path d="M56 5l14 14-14 14-14-14z" />
        </Icon>
        功能
      </Action>
      <Action>
        <Icon>
          <circle cx="40" cy="35" r="31.500" />
          <g fill="#666" stroke="none"><circle cx="26" cy="35" r="3.800" /><circle cx="40" cy="35" r="3.800" /><circle cx="54" cy="35" r="3.800" /></g>
        </Icon>
        设自选
      </Action>
    </BottomItems>
    <HomeBar>
      <HomeSeg $w={287} $r="8px 0 0 8px" />
      <HomeSeg $w={394} />
      <HomeSeg $w={287} $r="0 8px 8px 0" />
    </HomeBar>
  </Bottom>
)

export default function App() {
  return (
    <Page>
      <GlobalStyle />
      <Status />
      <Header />
      <QuotePanel />
      <NoticeBar />
      <PeriodTabs />
      <MaLegend />
      <CandleChart />
      <VolumeLegend />
      <VolumeChart />
      <VolumeLegend />
      <VolumeChart />
      <Dates>
        <Fit w={214} size={48} color="#888">20250904</Fit>
        <Fit w={189} size={48} color="#888">20251121</Fit>
      </Dates>
      <Promo />
      <BottomBar />
    </Page>
  )
}
